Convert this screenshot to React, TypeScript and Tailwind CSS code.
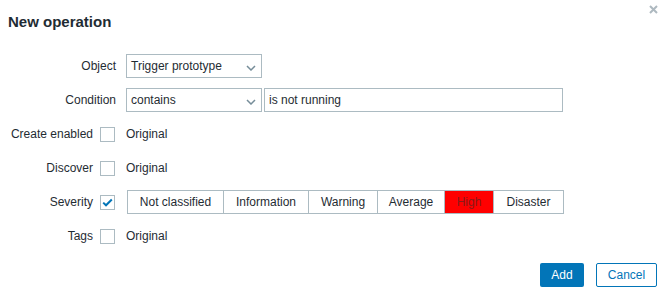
import React from "react";

const labelCls = "flex items-center justify-end h-6 whitespace-nowrap";

function Chevron() {
  return (
    <svg width="10" height="6" viewBox="0 0 10 6" className="absolute right-[5px] top-[10px]">
      <path d="M1 1 L5 5 L9 1" fill="none" stroke="#768d99" strokeWidth="1.5" />
    </svg>
  );
}

function Select({ value }: { value: string }) {
  return (
    <div className="relative w-[136px] h-6 border border-[#acbbc2] bg-white pl-[4px] flex items-center">
      <span>{value}</span>
      <Chevron />
    </div>
  );
}

function Checkbox({ checked }: { checked?: boolean }) {
  return (
    <div className="w-[15px] h-[15px] border border-[#acbbc2] bg-white flex items-center justify-center">
      {checked && (
        <svg width="11" height="9" viewBox="0 0 11 9">
          <path d="M1.2 4.6 L4 7.3 L9.8 1.5" fill="none" stroke="#0275b8" strokeWidth="2" />
        </svg>
      )}
    </div>
  );
}

function CheckLabel({ text, checked }: { text: string; checked?: boolean }) {
  return (
    <div className={`${labelCls} gap-[7px] pr-[1px]`}>
      <span>{text}</span>
      <Checkbox checked={checked} />
    </div>
  );
}

// segment widths measured from the reference
const severities = [
  { name: "Not classified", w: "w-[97px]" },
  { name: "Information", w: "w-[85px]" },
  { name: "Warning", w: "w-[69px]" },
  { name: "Average", w: "w-[67px]" },
  { name: "High", w: "w-[49px]" },
  { name: "Disaster", w: "w-[70px]" },
];

export default function App() {
  return (
    <div
      className="relative w-[664px] h-[296px] bg-white text-[12px] text-[#1f2c33] overflow-hidden"
      style={{ fontFamily: '"Liberation Sans", Arial, sans-serif' }}
    >
      <div className="absolute right-[6px] top-[5px]">
        <svg width="9" height="9" viewBox="0 0 9 9">
          <path d="M1 1 L8 8 M8 1 L1 8" stroke="#aeb9c0" strokeWidth="2" />
        </svg>
      </div>

      <h2 className="pt-[13px] pl-[8px] text-[15px] leading-[18px] font-bold">New operation</h2>

      <div className="mt-[23px] grid grid-cols-[116px_auto] gap-x-[10px] gap-y-[10px]">
        <div className={labelCls}>Object</div>
        <Select value="Trigger prototype" />

        <div className={labelCls}>Condition</div>
        <div className="flex gap-[2px]">
          <Select value="contains" />
          <div className="w-[299px] h-6 border border-[#acbbc2] pl-[4px] flex items-center">is not running</div>
        </div>

        <CheckLabel text="Create enabled" />
        <div className="flex items-center h-6">Original</div>

        <CheckLabel text="Discover" />
        <div className="flex items-center h-6">Original</div>

        <CheckLabel text="Severity" checked />
        <div className="flex h-6 pl-[1px]">
          {severities.map((s, i) => (
            <div
              key={s.name}
              className={`${s.w} h-6 flex items-center justify-center border-y border-r border-[#acbbc2] ${i === 0 ? "border-l" : ""} ${
                s.name === "High" ? "bg-[#ff0000] text-[#8a1a1a]" : "bg-white"
              }`}
            >
              {s.name}
            </div>
          ))}
        </div>

        <CheckLabel text="Tags" />
        <div className="flex items-center h-6">Original</div>
      </div>

      <div className="mt-[15px] flex justify-end gap-[12px] pr-[7px]">
        <button className="w-[44px] h-[24px] bg-[#0275b8] text-white rounded-[2px]">Add</button>
        <button className="w-[61px] h-[24px] border border-[#0275b8] text-[#0275b8] bg-white rounded-[2px]">Cancel</button>
      </div>
    </div>
  );
}
